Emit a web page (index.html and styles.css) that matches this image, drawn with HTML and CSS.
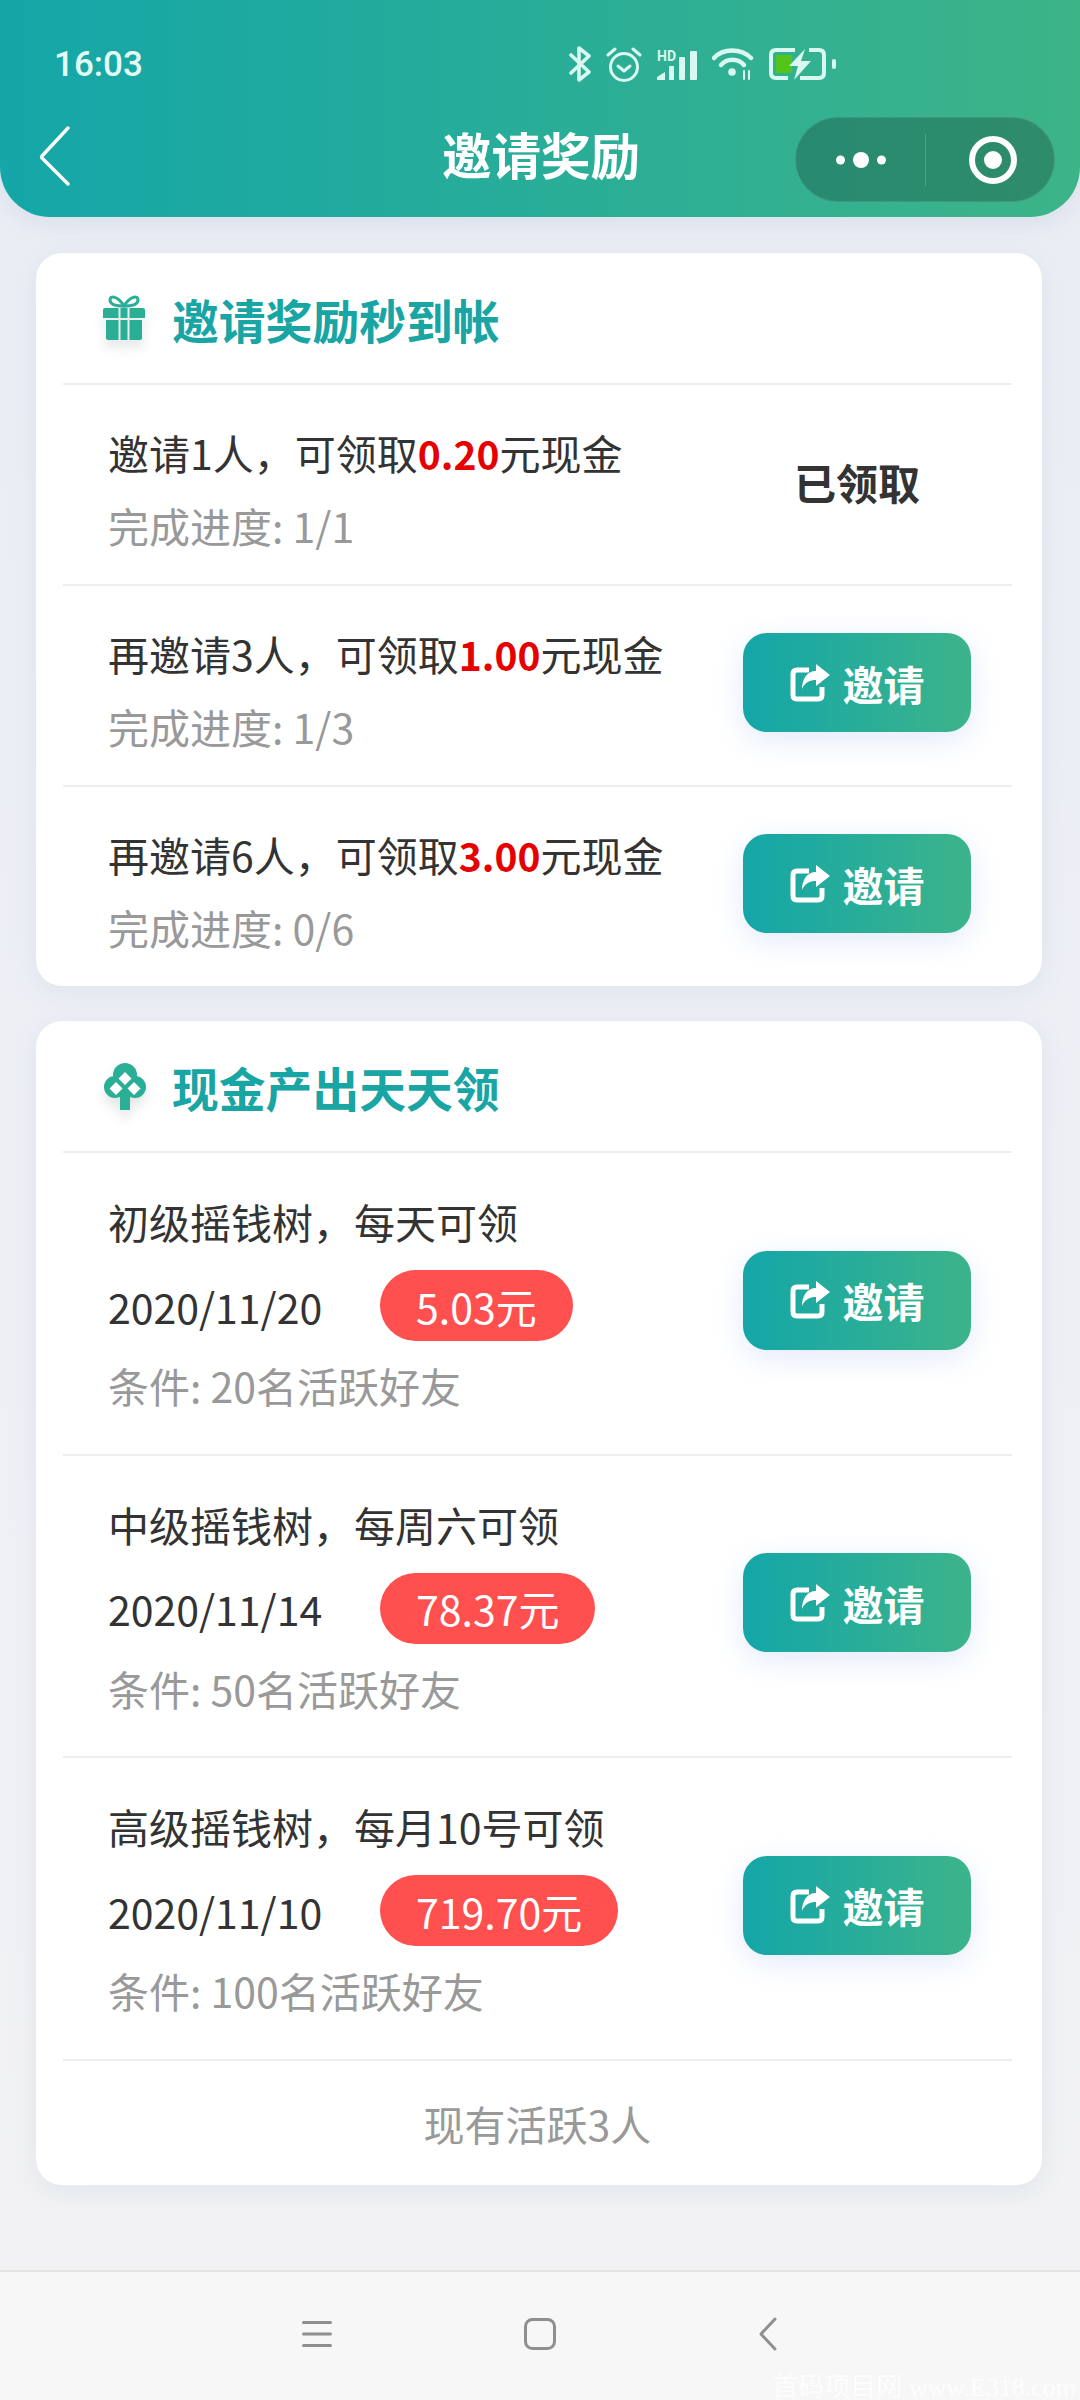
FILE: index.html
```html
<!DOCTYPE html>

<html>
<head>
	<meta charset="utf-8" />
	<title>邀请奖励</title>
	<link rel="stylesheet" href="styles.css">
</head>

<body>
	<div id="header">
		<div id="status-bar">
			<span class="time">16:03</span>
			<div class="status-icons">
				<svg width="22" height="36" viewBox="0 0 22 36" fill="none" stroke="#d8f8f0" stroke-width="3.6" stroke-linejoin="round" stroke-linecap="round"><path d="M2 9 L20 26 L10 34 V2 L20 10 L2 27"/></svg>
				<svg width="36" height="36" viewBox="0 0 36 36" fill="none" stroke="#d8f8f0" stroke-width="3" stroke-linecap="round" stroke-linejoin="round"><circle cx="18" cy="21" r="13.5"/><path d="M12 20 L18 25 L24 20"/><path d="M2 9 L9 3"/><path d="M34 9 L27 3"/></svg>
				<svg width="40" height="34" viewBox="0 -4 40 34" fill="#d8f8f0">
					<text x="0" y="10" class="hd">HD</text>
					<path d="M0 29 V26 L8 21 V29 Z"/><rect x="12" y="15" width="5" height="14"/><rect x="22" y="6" width="6" height="23" rx="1"/><rect x="33" y="0" width="7" height="29" rx="1"/>
				</svg>
				<svg width="42" height="32" viewBox="0 0 42 32" fill="none" stroke="#d8f8f0" stroke-width="4.4" stroke-linecap="round"><path d="M2 10 C11 0 29 0 39 10"/><path d="M9 17 C15 10 26 10 32 17"/><circle cx="20" cy="24" r="3.8" fill="#d8f8f0" stroke="none"/><path d="M32 23 V31 M37 23 V31" stroke-width="2"/></svg>
				<svg width="69" height="32" viewBox="0 0 69 32">
					<path d="M26 2 H7 Q2 2 2 7 V25 Q2 30 7 30 H19 M40 2 H50 Q55 2 55 7 V25 Q55 30 50 30 H31" fill="none" stroke="#d8f8f0" stroke-width="4"/>
					<rect x="7" y="7" width="16" height="18" fill="#52c41a"/>
					<path d="M36 1 L20 18 H29 L25 32 L42 13 H32 Z" fill="#d8f8f0"/>
					<rect x="63" y="11" width="4" height="10" rx="2" fill="#d8f8f0"/>
				</svg>
			</div>
		</div>
		<div id="nav-bar">
			<svg class="back" width="32" height="60" viewBox="0 0 32 60" fill="none" stroke="#fff" stroke-width="3.4" stroke-linecap="round" stroke-linejoin="round"><path d="M29 2 L3 30 Q2 31 3 32 L29 58"/></svg>
			<div class="page-title">邀请奖励</div>
			<div class="capsule">
				<div class="capsule-part">
					<svg width="50" height="16" viewBox="0 0 50 16" fill="#fff"><circle cx="4.5" cy="8" r="4.5"/><circle cx="25" cy="8" r="8"/><circle cx="45.5" cy="8" r="4.5"/></svg>
				</div>
				<div class="capsule-part capsule-last">
					<svg width="48" height="48" viewBox="0 0 48 48"><circle cx="24" cy="24" r="21" fill="none" stroke="#fff" stroke-width="6"/><circle cx="24" cy="24" r="9" fill="#fff"/></svg>
				</div>
			</div>
		</div>
	</div>

	<div id="content">
		<div class="card">
			<div class="card-title">
				<div class="title-icon">
					<svg width="46" height="46" viewBox="0 0 46 46" fill="#2bae96">
						<path d="M21 11 C15 1 7 0 7 5 C7 10 15 11 21 11 C27 11 35 10 35 5 C35 0 27 1 21 11 Z" fill="none" stroke="#2bae96" stroke-width="3"/>
						<path d="M0 15 Q0 13 2 13 H15.5 V23 H0 Z"/><rect x="17.5" y="13" width="7" height="10"/><path d="M26.5 13 H40 Q42 13 42 15 V23 H26.5 Z"/>
						<path d="M3 25 H15.5 V45 H5 Q3 45 3 43 Z"/><rect x="17.5" y="25" width="7" height="20"/><path d="M26.5 25 H39 V43 Q39 45 37 45 H26.5 Z"/>
					</svg>
				</div>
				<span>邀请奖励秒到帐</span>
			</div>
			<div class="row">
				<div class="row-text">
					<p>邀请1人，可领取<b>0.20</b>元现金</p>
					<p class="muted">完成进度: 1/1</p>
				</div>
				<div class="done">已领取</div>
			</div>
			<div class="row">
				<div class="row-text">
					<p>再邀请3人，可领取<b>1.00</b>元现金</p>
					<p class="muted">完成进度: 1/3</p>
				</div>
				<div class="invite">
					<svg width="40" height="38" viewBox="0 0 40 38" fill="none"><path d="M19 6 H7 Q3 6 3 10 V31 Q3 35 7 35 H28 Q32 35 32 31 V23" stroke="#fff" stroke-width="5"/><path d="M26 0 L40 11 L26 22 V16 C20 16 15 18 12 25 C12 15 17 7 26 7 Z" fill="#fff"/></svg>
					<span>邀请</span>
				</div>
			</div>
			<div class="row">
				<div class="row-text">
					<p>再邀请6人，可领取<b>3.00</b>元现金</p>
					<p class="muted">完成进度: 0/6</p>
				</div>
				<div class="invite">
					<svg width="40" height="38" viewBox="0 0 40 38" fill="none"><path d="M19 6 H7 Q3 6 3 10 V31 Q3 35 7 35 H28 Q32 35 32 31 V23" stroke="#fff" stroke-width="5"/><path d="M26 0 L40 11 L26 22 V16 C20 16 15 18 12 25 C12 15 17 7 26 7 Z" fill="#fff"/></svg>
					<span>邀请</span>
				</div>
			</div>
		</div>

		<div class="card">
			<div class="card-title">
				<div class="title-icon">
					<svg width="46" height="47" viewBox="-1 0 46 47">
						<g fill="#2bae96"><circle cx="21" cy="12" r="12"/><circle cx="11" cy="24" r="11"/><circle cx="31" cy="24" r="11"/><rect x="16" y="28" width="10" height="19"/></g>
						<path d="M21 9 L27.5 15.5 L21 22 L14.5 15.5 Z M12 19 L18.5 25.5 L12 32 L5.5 25.5 Z M30 19 L36.5 25.5 L30 32 L23.5 25.5 Z" fill="#fff"/>
					</svg>
				</div>
				<span>现金产出天天领</span>
			</div>
			<div class="row row-tall">
				<div class="row-text">
					<p>初级摇钱树，每天可领</p>
					<div class="date-line"><span class="date">2020/11/20</span><span class="pill">5.03元</span></div>
					<p class="muted">条件: 20名活跃好友</p>
				</div>
				<div class="invite">
					<svg width="40" height="38" viewBox="0 0 40 38" fill="none"><path d="M19 6 H7 Q3 6 3 10 V31 Q3 35 7 35 H28 Q32 35 32 31 V23" stroke="#fff" stroke-width="5"/><path d="M26 0 L40 11 L26 22 V16 C20 16 15 18 12 25 C12 15 17 7 26 7 Z" fill="#fff"/></svg>
					<span>邀请</span>
				</div>
			</div>
			<div class="row row-tall">
				<div class="row-text">
					<p>中级摇钱树，每周六可领</p>
					<div class="date-line"><span class="date">2020/11/14</span><span class="pill">78.37元</span></div>
					<p class="muted">条件: 50名活跃好友</p>
				</div>
				<div class="invite">
					<svg width="40" height="38" viewBox="0 0 40 38" fill="none"><path d="M19 6 H7 Q3 6 3 10 V31 Q3 35 7 35 H28 Q32 35 32 31 V23" stroke="#fff" stroke-width="5"/><path d="M26 0 L40 11 L26 22 V16 C20 16 15 18 12 25 C12 15 17 7 26 7 Z" fill="#fff"/></svg>
					<span>邀请</span>
				</div>
			</div>
			<div class="row row-tall">
				<div class="row-text">
					<p>高级摇钱树，每月10号可领</p>
					<div class="date-line"><span class="date">2020/11/10</span><span class="pill">719.70元</span></div>
					<p class="muted">条件: 100名活跃好友</p>
				</div>
				<div class="invite">
					<svg width="40" height="38" viewBox="0 0 40 38" fill="none"><path d="M19 6 H7 Q3 6 3 10 V31 Q3 35 7 35 H28 Q32 35 32 31 V23" stroke="#fff" stroke-width="5"/><path d="M26 0 L40 11 L26 22 V16 C20 16 15 18 12 25 C12 15 17 7 26 7 Z" fill="#fff"/></svg>
					<span>邀请</span>
				</div>
			</div>
			<div class="active-count">现有活跃3人</div>
		</div>
	</div>

	<div id="bottom-nav">
		<svg class="nav-menu" width="32" height="28" viewBox="0 0 32 28" fill="#8f8f8f"><rect x="1" y="1" width="30" height="3" rx="1.5"/><rect x="1" y="12.5" width="30" height="3" rx="1.5"/><rect x="1" y="24" width="30" height="3" rx="1.5"/></svg>
		<svg width="32" height="32" viewBox="0 0 32 32" fill="none" stroke="#8f8f8f" stroke-width="3"><rect x="1.5" y="1.5" width="29" height="29" rx="7"/></svg>
		<svg class="nav-back" width="20" height="34" viewBox="0 0 20 34" fill="none" stroke="#8f8f8f" stroke-width="3" stroke-linecap="round" stroke-linejoin="round"><path d="M17 2 L3 17 L17 32"/></svg>
		<div class="watermark">首码项目网 www.E318.com</div>
	</div>
</body>

</html>
```

FILE: styles.css
```css
* {
	margin: 0;
	padding: 0;
	box-sizing: border-box;
}

body {
	width: 1080px;
	height: 2400px;
	display: flex;
	flex-direction: column;
	overflow: hidden;
	background: linear-gradient(to bottom, #e9edf4, #eef0f5 60%, #f2f2f3);
	font-family: "Noto Sans CJK SC", "Noto Sans", sans-serif;
	font-size: 41px;
	color: #333;
}

/* Header */

#header {
	height: 217px;
	flex-shrink: 0;
	border-radius: 0 0 50px 50px;
	background: linear-gradient(to right, #14a6a8, #3db488);
	box-shadow: 0 6px 24px rgba(120, 140, 180, .15);
}

#status-bar {
	height: 117px;
	display: flex;
	align-items: center;
	padding: 11px 242px 0 54px;
	color: #e4fbf5;
}

.time {
	font-family: Roboto, sans-serif;
	font-weight: 500;
	font-size: 35px;
}

.status-icons {
	margin-left: auto;
	display: flex;
	align-items: center;
	gap: 15px;
}

.hd {
	font-family: Roboto, sans-serif;
	font-size: 14px;
	font-weight: 700;
}

#nav-bar {
	height: 85px;
	display: grid;
	grid-template-columns: 1fr auto 1fr;
	align-items: center;
	padding: 0 25px;
}

.back {
	margin: 0 0 8px 14px;
}

.page-title {
	padding: 0 0 12px 2px;
	font-size: 49.5px;
	font-weight: 700;
	color: #fff;
}

.capsule {
	width: 260px;
	height: 85px;
	justify-self: end;
	display: flex;
	align-items: center;
	border-radius: 43px;
	background-color: rgba(0, 0, 0, .22);
	border: 1px solid rgba(255, 255, 255, .1);
}

.capsule-part {
	width: 129px;
	height: 52px;
	display: flex;
	align-items: center;
	justify-content: center;
}

.capsule-last {
	padding-left: 6px;
	border-left: 1px solid rgba(255, 255, 255, .18);
}

/* Cards */

#content {
	flex: 1;
	padding: 36px 38px 0 36px;
	display: flex;
	flex-direction: column;
	gap: 35px;
}

.card {
	padding: 0 30px 0 27px;
	border-radius: 26px;
	background-color: white;
	box-shadow: 0 6px 24px rgba(130, 150, 190, .12);
}

.card-title {
	height: 130px;
	display: flex;
	align-items: center;
	padding-left: 40px;
	gap: 23px;
	font-size: 46.8px;
	font-weight: 700;
	color: #18a5a3;
}

.title-icon {
	display: flex;
	filter: drop-shadow(0 8px 6px rgba(120, 130, 130, .2));
}

.row {
	height: 201px;
	display: flex;
	align-items: center;
	justify-content: space-between;
	padding: 0 41px 0 45px;
	border-top: 2px solid #eee;
}

.row-tall {
	height: 302.5px;
}

.row-text {
	margin-top: 8px;
	line-height: 72px;
}

.row-tall .row-text {
	margin-top: 0;
}

.row-text b {
	color: #e60000;
	font-size: 39px;
	font-weight: 700;
}

.muted {
	color: #999;
}

.done {
	width: 228px;
	margin-bottom: 6px;
	text-align: center;
	font-size: 42px;
	font-weight: 700;
}

.invite {
	width: 228px;
	height: 99px;
	margin-bottom: 6px;
	display: flex;
	align-items: center;
	justify-content: center;
	gap: 13px;
	border-radius: 24px;
	background: linear-gradient(to right, #14a6a8, #3cb48a);
	box-shadow: 0 8px 30px rgba(110, 150, 230, .2);
	color: white;
	font-weight: 700;
}

.date-line {
	height: 71px;
	margin: 13px 0 8px;
	display: flex;
	align-items: center;
}

.date {
	width: 272px;
}

.pill {
	height: 71px;
	padding: 0 36px;
	display: flex;
	align-items: center;
	border-radius: 36px;
	background-color: #ff4f4f;
	color: white;
}

.active-count {
	height: 126px;
	display: flex;
	align-items: center;
	justify-content: center;
	border-top: 2px solid #eee;
	color: #999;
}

/* Bottom navigation */

#bottom-nav {
	height: 130px;
	flex-shrink: 0;
	position: relative;
	display: grid;
	grid-template-columns: repeat(3, 226px);
	justify-content: center;
	justify-items: center;
	align-items: center;
	padding-bottom: 4px;
	border-top: 2px solid #e4e4e4;
	background-color: #f7f7f7;
}

.nav-menu {
	margin-left: 6px;
}

.nav-back {
	margin-left: 3px;
}

.watermark {
	position: absolute;
	right: 4px;
	bottom: -3px;
	font-family: "Liberation Serif", "Noto Sans CJK SC", serif;
	font-size: 26px;
	white-space: nowrap;
	color: #fdfdfd;
}
```
